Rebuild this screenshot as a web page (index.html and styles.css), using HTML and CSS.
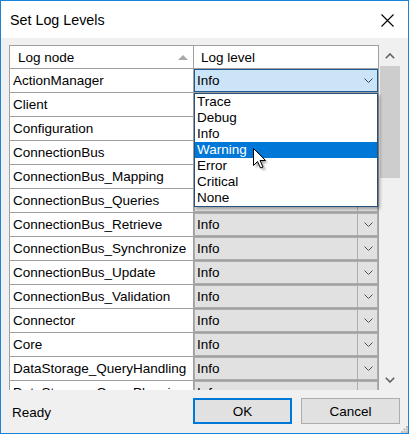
FILE: index.html
```html
<!DOCTYPE html>
<html>
<head>
<meta charset="utf-8">
<link rel="stylesheet" href="styles.css">
</head>
<body>
<div class="window">
  <div class="titlebar">
    <span class="title">Set Log Levels</span>
    <svg class="close" width="13" height="13" viewBox="0 0 13 13"><path d="M0.5 0.5 L12.5 12.5 M12.5 0.5 L0.5 12.5" stroke="#000" stroke-width="1.1" fill="none"/></svg>
  </div>
  <div class="content">
    <div class="gridwrap">
      <div class="grid">
        <div class="row header">
          <div class="cell c1"><span>Log node</span><svg class="sort" width="10" height="6" viewBox="0 0 10 6"><path d="M0 6 L5 1 L10 6 Z" fill="#a9a9a9"/></svg></div>
          <div class="cell hc2">Log level</div>
        </div>
        <div class="row"><div class="cell c1">ActionManager</div><div class="cell c2"><div class="combo focused"><span class="val">Info</span><span class="dbtn"><svg width="9" height="5" viewBox="0 0 9 5"><polyline points="0.5,0.5 4.5,4.5 8.5,0.5" fill="none" stroke="#444" stroke-width="1"/></svg></span></div></div></div>
        <div class="row"><div class="cell c1">Client</div><div class="cell c2"><div class="combo"><span class="val">Info</span><span class="dbtn"><svg width="9" height="5" viewBox="0 0 9 5"><polyline points="0.5,0.5 4.5,4.5 8.5,0.5" fill="none" stroke="#555" stroke-width="1"/></svg></span></div></div></div>
        <div class="row"><div class="cell c1">Configuration</div><div class="cell c2"><div class="combo"><span class="val">Info</span><span class="dbtn"><svg width="9" height="5" viewBox="0 0 9 5"><polyline points="0.5,0.5 4.5,4.5 8.5,0.5" fill="none" stroke="#555" stroke-width="1"/></svg></span></div></div></div>
        <div class="row"><div class="cell c1">ConnectionBus</div><div class="cell c2"><div class="combo"><span class="val">Info</span><span class="dbtn"><svg width="9" height="5" viewBox="0 0 9 5"><polyline points="0.5,0.5 4.5,4.5 8.5,0.5" fill="none" stroke="#555" stroke-width="1"/></svg></span></div></div></div>
        <div class="row"><div class="cell c1">ConnectionBus_Mapping</div><div class="cell c2"><div class="combo"><span class="val">Info</span><span class="dbtn"><svg width="9" height="5" viewBox="0 0 9 5"><polyline points="0.5,0.5 4.5,4.5 8.5,0.5" fill="none" stroke="#555" stroke-width="1"/></svg></span></div></div></div>
        <div class="row"><div class="cell c1">ConnectionBus_Queries</div><div class="cell c2"><div class="combo"><span class="val">Info</span><span class="dbtn"><svg width="9" height="5" viewBox="0 0 9 5"><polyline points="0.5,0.5 4.5,4.5 8.5,0.5" fill="none" stroke="#555" stroke-width="1"/></svg></span></div></div></div>
        <div class="row"><div class="cell c1">ConnectionBus_Retrieve</div><div class="cell c2"><div class="combo"><span class="val">Info</span><span class="dbtn"><svg width="9" height="5" viewBox="0 0 9 5"><polyline points="0.5,0.5 4.5,4.5 8.5,0.5" fill="none" stroke="#555" stroke-width="1"/></svg></span></div></div></div>
        <div class="row"><div class="cell c1">ConnectionBus_Synchronize</div><div class="cell c2"><div class="combo"><span class="val">Info</span><span class="dbtn"><svg width="9" height="5" viewBox="0 0 9 5"><polyline points="0.5,0.5 4.5,4.5 8.5,0.5" fill="none" stroke="#555" stroke-width="1"/></svg></span></div></div></div>
        <div class="row"><div class="cell c1">ConnectionBus_Update</div><div class="cell c2"><div class="combo"><span class="val">Info</span><span class="dbtn"><svg width="9" height="5" viewBox="0 0 9 5"><polyline points="0.5,0.5 4.5,4.5 8.5,0.5" fill="none" stroke="#555" stroke-width="1"/></svg></span></div></div></div>
        <div class="row"><div class="cell c1">ConnectionBus_Validation</div><div class="cell c2"><div class="combo"><span class="val">Info</span><span class="dbtn"><svg width="9" height="5" viewBox="0 0 9 5"><polyline points="0.5,0.5 4.5,4.5 8.5,0.5" fill="none" stroke="#555" stroke-width="1"/></svg></span></div></div></div>
        <div class="row"><div class="cell c1">Connector</div><div class="cell c2"><div class="combo"><span class="val">Info</span><span class="dbtn"><svg width="9" height="5" viewBox="0 0 9 5"><polyline points="0.5,0.5 4.5,4.5 8.5,0.5" fill="none" stroke="#555" stroke-width="1"/></svg></span></div></div></div>
        <div class="row"><div class="cell c1">Core</div><div class="cell c2"><div class="combo"><span class="val">Info</span><span class="dbtn"><svg width="9" height="5" viewBox="0 0 9 5"><polyline points="0.5,0.5 4.5,4.5 8.5,0.5" fill="none" stroke="#555" stroke-width="1"/></svg></span></div></div></div>
        <div class="row"><div class="cell c1">DataStorage_QueryHandling</div><div class="cell c2"><div class="combo"><span class="val">Info</span><span class="dbtn"><svg width="9" height="5" viewBox="0 0 9 5"><polyline points="0.5,0.5 4.5,4.5 8.5,0.5" fill="none" stroke="#555" stroke-width="1"/></svg></span></div></div></div>
        <div class="row"><div class="cell c1">DataStorage_QueryPlanning</div><div class="cell c2"><div class="combo"><span class="val">Info</span><span class="dbtn"><svg width="9" height="5" viewBox="0 0 9 5"><polyline points="0.5,0.5 4.5,4.5 8.5,0.5" fill="none" stroke="#555" stroke-width="1"/></svg></span></div></div></div>
      </div>
      <div class="vscroll">
        <div class="sbtn"><svg width="10" height="6" viewBox="0 0 10 6"><polyline points="0.8,5.2 5,1 9.2,5.2" fill="none" stroke="#606060" stroke-width="1.6"/></svg></div>
        <div class="thumb"></div>
        <div class="track"></div>
        <div class="sbtn"><svg width="10" height="6" viewBox="0 0 10 6"><polyline points="0.8,0.8 5,5 9.2,0.8" fill="none" stroke="#606060" stroke-width="1.6"/></svg></div>
      </div>
    </div>
    <div class="footer">
      <span class="status">Ready</span>
      <button class="button default">OK</button>
      <button class="button">Cancel</button>
    </div>
  </div>

  <div class="dropdown">
    <div class="opt">Trace</div>
    <div class="opt">Debug</div>
    <div class="opt">Info</div>
    <div class="opt sel">Warning</div>
    <div class="opt">Error</div>
    <div class="opt">Critical</div>
    <div class="opt">None</div>
  </div>

  <svg class="cursor" width="16" height="24" viewBox="0 0 16 24">
    <defs><filter id="sh" x="-50%" y="-50%" width="200%" height="200%"><feGaussianBlur stdDeviation="1"/></filter></defs>
    <path d="M2.5 2.5 L2.5 19.5 L6.5 15.5 L9.5 22 L12 21 L9 14.5 L14.5 14.5 Z" fill="#000" opacity="0.35" filter="url(#sh)" transform="translate(1.5,1.5)"/>
    <path d="M1.5 1.5 L1.5 18.5 L5.5 14.5 L8.5 21 L11 20 L8 13.5 L13.5 13.5 Z" fill="#fff" stroke="#000" stroke-width="1" stroke-linejoin="miter"/>
  </svg>

  <svg class="grip" width="7" height="7" viewBox="0 0 7 7">
    <rect x="5" y="0" width="2" height="2" fill="#bdbdbd"/>
    <rect x="2.5" y="2.5" width="2" height="2" fill="#bdbdbd"/>
    <rect x="5" y="2.5" width="2" height="2" fill="#bdbdbd"/>
    <rect x="0" y="5" width="2" height="2" fill="#bdbdbd"/>
    <rect x="2.5" y="5" width="2" height="2" fill="#bdbdbd"/>
    <rect x="5" y="5" width="2" height="2" fill="#bdbdbd"/>
  </svg>
</div>
</body>
</html>
```

FILE: styles.css
```css
* { box-sizing: border-box; }

body {
  margin: 0;
  font-family: "Liberation Sans", Arial, sans-serif;
  font-size: 13.5px;
  color: #000;
}

.window {
  width: 409px;
  height: 434px;
  border: 1px solid #1883d7;
  background: #f0f0f0;
  position: relative;
  display: flex;
  flex-direction: column;
  overflow: hidden;
}

.titlebar {
  flex: none;
  height: 37px;
  background: #fff;
  display: flex;
  align-items: center;
  justify-content: space-between;
  padding: 0 14px 0 9px;
}

.title {
  font-size: 14.3px;
  margin-top: 1px;
}

.close { display: block; margin-top: 1px; }

.content {
  flex: 1;
  display: flex;
  flex-direction: column;
  padding: 7px 8px 0 8px;
}

.gridwrap {
  display: flex;
  height: 345px;
  flex: none;
}

.grid {
  width: 370px;
  border-left: 1px solid #a0a0a0;
  border-top: 1px solid #a0a0a0;
  overflow: hidden;
  background: #fff;
}

.row {
  display: grid;
  grid-template-columns: 184px 185px;
}

.cell {
  height: 24px;
  border-right: 1px solid #a0a0a0;
  border-bottom: 1px solid #a0a0a0;
  display: flex;
  align-items: center;
  white-space: nowrap;
  overflow: hidden;
}

.c1 {
  padding-left: 3px;
  background: #fff;
}

.header .cell {
  height: 23px;
  background: #fff;
}

.header .c1 {
  padding-left: 8px;
  padding-right: 5px;
  justify-content: space-between;
}

.hc2 {
  padding-left: 7px;
}

.sort { display: block; margin-top: -1px; }

.c2 {
  align-items: stretch;
}

.combo {
  flex: 1;
  display: flex;
  border: 1px solid #adadad;
  background: #e1e1e1;
}

.combo .val {
  flex: 1;
  display: flex;
  align-items: center;
  padding-left: 2px;
}

.combo .dbtn {
  width: 20px;
  border-left: 1px solid #adadad;
  display: flex;
  align-items: center;
  justify-content: center;
}

.combo .dbtn svg { display: block; margin-left: 1px; }

.combo.focused {
  border-color: #1f5b91;
  background: #cce4f7;
}

.combo.focused .dbtn { border-left-color: transparent; }

.vscroll {
  width: 21px;
  display: flex;
  flex-direction: column;
  background: #f0f0f0;
}

.sbtn {
  height: 21px;
  flex: none;
  display: flex;
  align-items: center;
  justify-content: center;
  padding-left: 1px;
}

.sbtn svg { display: block; }

.thumb {
  flex: none;
  height: 112px;
  margin-left: 1px;
  background: #cdcdcd;
}

.track { flex: 1; }

.footer {
  display: flex;
  align-items: center;
  padding-top: 8px;
}

.status {
  flex: 1;
  padding-left: 3px;
  padding-top: 3px;
}

.button {
  width: 99px;
  height: 26px;
  background: #e1e1e1;
  border: 1px solid #adadad;
  font-family: inherit;
  font-size: 13.5px;
  color: #000;
  padding: 0;
  margin: 0;
}

.button.default {
  border: 2px solid #0078d7;
}

.button + .button { margin-left: 9px; }

.dropdown {
  position: absolute;
  left: 193px;
  top: 92px;
  width: 184px;
  height: 114px;
  border: 1px solid #24507f;
  background: #fff;
  box-shadow: 2px 2px 3px rgba(0, 0, 0, 0.3);
}

.opt {
  height: 16px;
  line-height: 16px;
  padding-left: 2px;
}

.opt.sel {
  background: #0078d7;
  color: #fff;
}

.cursor {
  position: absolute;
  left: 251px;
  top: 146px;
}

.grip {
  position: absolute;
  right: 0;
  bottom: 0;
}
```
